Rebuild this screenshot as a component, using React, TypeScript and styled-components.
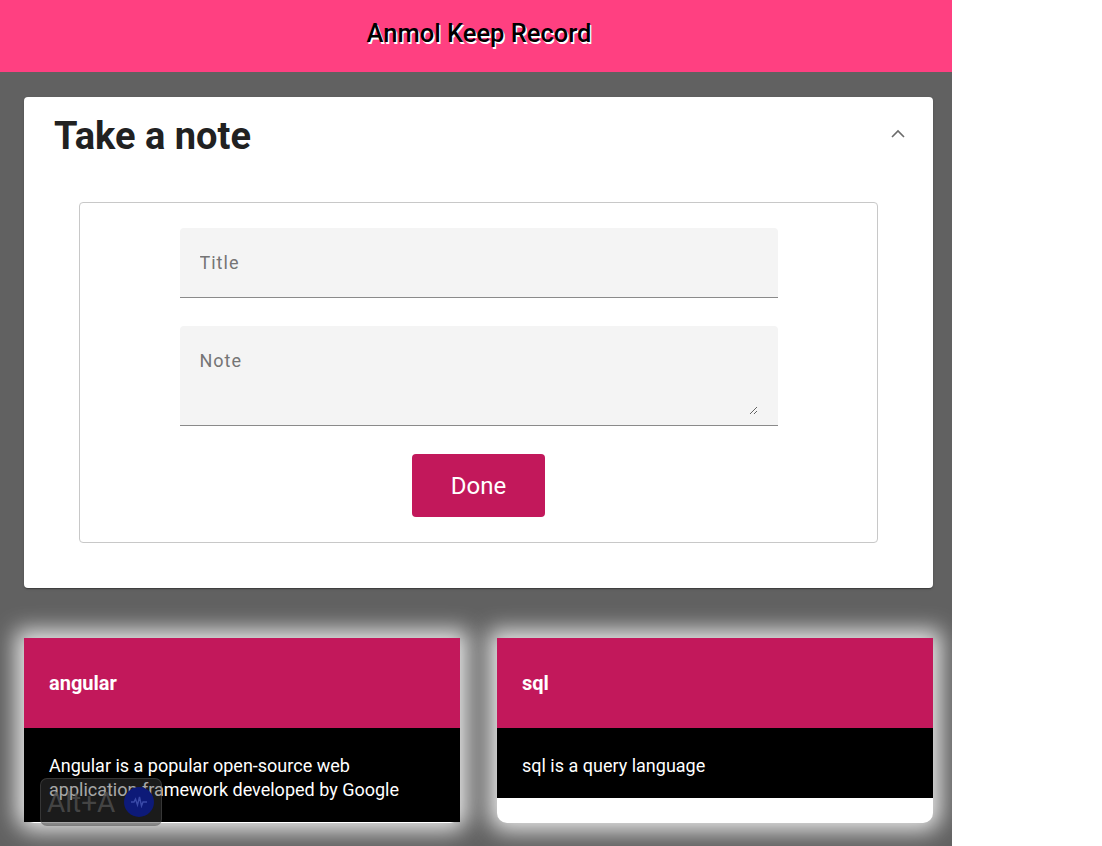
import React from "react";
import styled, { createGlobalStyle } from "styled-components";

const Global = createGlobalStyle`
  html, body { margin: 0; padding: 0; background: #ffffff; }
  body { font-family: Roboto, "Noto Sans", Arial, sans-serif; }
  * { box-sizing: border-box; }
`;

const Page = styled.div`
  width: 952px;
  min-height: 846px;
  background: #616161;
  display: flex;
  flex-direction: column;
  position: relative;
`;

const Header = styled.header`
  height: 72px;
  background: #ff4081;
  display: flex;
  justify-content: center;
  padding-top: 17px;
  padding-left: 6px;
`;

const HeaderTitle = styled.h1`
  margin: 0;
  font-family: Roboto, sans-serif;
  font-size: 25.5px;
  font-weight: 500;
  line-height: 32px;
  color: #000;
  text-shadow: 1.5px 1.5px 0 #ffffff;
`;

const Main = styled.main`
  padding: 25px 19px 0 24px;
  display: flex;
  flex-direction: column;
  gap: 50px;
`;

const Accordion = styled.section`
  background: #fff;
  border-radius: 4px;
  box-shadow: 0 2px 1px -1px rgba(0,0,0,0.2), 0 1px 1px 0 rgba(0,0,0,0.14), 0 1px 3px 0 rgba(0,0,0,0.12);
  height: 491px;
  display: flex;
  flex-direction: column;
`;

const AccordionHead = styled.div`
  display: flex;
  align-items: center;
  justify-content: space-between;
  padding: 4px 26px 0 30px;
  height: 74px;
`;

const AccordionTitle = styled.h2`
  margin: 0;
  font-size: 38px;
  font-weight: 700;
  color: #212121;
  line-height: 46px;
`;

const Chevron = styled.svg`
  width: 18px;
  height: 18px;
  margin-top: -4px;
`;

const FormBox = styled.form`
  margin: 31px 55px 0 55px;
  border: 1px solid #c8c8c8;
  border-radius: 4px;
  height: 341px;
  display: flex;
  flex-direction: column;
  align-items: center;
  padding-top: 25px;
`;

const FieldShell = `
  width: 598px;
  background: #f4f4f4;
  border-bottom: 1px solid #8a8a8a;
  border-radius: 4px 4px 0 0;
`;

const FieldText = `
  font-family: Roboto, sans-serif;
  font-size: 18px;
  letter-spacing: 1px;
  color: #333;
  outline: none;
  &::placeholder { color: #757575; opacity: 1; }
`;

const TitleInput = styled.input`
  ${FieldShell}
  ${FieldText}
  border-top: none;
  border-left: none;
  border-right: none;
  height: 70px;
  padding: 0 20px;
`;

const NoteShell = styled.div`
  ${FieldShell}
  height: 100px;
  margin-top: 28px;
  padding: 23px 20px 10px 20px;
  display: flex;
`;

const NoteArea = styled.textarea`
  ${FieldText}
  flex: 1;
  border: none;
  background: transparent;
  padding: 0;
  margin: 0;
  resize: vertical;
  line-height: 24px;
`;

const DoneButton = styled.button`
  margin-top: 28px;
  width: 133px;
  height: 63px;
  background: #c2185b;
  color: #fff;
  border: none;
  border-radius: 4px;
  font-family: Roboto, sans-serif;
  font-size: 24px;
  font-weight: 400;
`;

const NotesGrid = styled.div`
  display: grid;
  grid-template-columns: 436px 436px;
  column-gap: 37px;
`;

const Card = styled.article`
  height: 185px;
  background: #fff;
  border-radius: 0 0 10px 10px;
  box-shadow: 0 0 22px 8px rgba(255,255,255,0.85);
  display: flex;
  flex-direction: column;
`;

const CardHead = styled.div`
  height: 90px;
  background: #c2185b;
  display: flex;
  align-items: center;
  padding: 0 25px;
`;

const CardTitle = styled.h3`
  margin: 0;
  font-size: 20px;
  font-weight: 700;
  color: #fff;
`;

const CardBody = styled.div`
  background: #000;
  padding: 26px 25px 20px 25px;
  color: #fff;
  font-size: 18px;
  line-height: 24px;
`;

const Overlay = styled.div`
  position: absolute;
  left: 40px;
  top: 778px;
  width: 122px;
  height: 48px;
  border-radius: 7px;
  background: rgba(60,60,60,0.45);
  border: 1px solid rgba(120,120,120,0.3);
  display: flex;
  align-items: center;
  padding-left: 6px;
  gap: 9px;
`;

const OverlayText = styled.span`
  font-size: 28px;
  color: rgba(80,80,80,0.8);
  font-family: Roboto, sans-serif;
`;

const OverlayDot = styled.span`
  width: 30px;
  height: 30px;
  border-radius: 50%;
  background: #0d1a78;
  display: flex;
  align-items: center;
  justify-content: center;
`;

const notes = [
  { title: "angular", body: "Angular is a popular open-source web application framework developed by Google" },
  { title: "sql", body: "sql is a query language" },
];

export default function App() {
  return (
    <>
      <Global />
      <Page>
        <Header>
          <HeaderTitle>Anmol Keep Record</HeaderTitle>
        </Header>
        <Main>
          <Accordion>
            <AccordionHead>
              <AccordionTitle>Take a note</AccordionTitle>
              <Chevron viewBox="0 0 18 18">
                <path d="M3 12 9 6l6 6" fill="none" stroke="#6b6b6b" strokeWidth="1.6" />
              </Chevron>
            </AccordionHead>
            <FormBox onSubmit={(e) => e.preventDefault()}>
              <TitleInput placeholder="Title" />
              <NoteShell>
                <NoteArea placeholder="Note" />
              </NoteShell>
              <DoneButton type="submit">Done</DoneButton>
            </FormBox>
          </Accordion>
          <NotesGrid>
            {notes.map((n) => (
              <Card key={n.title}>
                <CardHead>
                  <CardTitle>{n.title}</CardTitle>
                </CardHead>
                <CardBody>{n.body}</CardBody>
              </Card>
            ))}
          </NotesGrid>
        </Main>
        <Overlay>
          <OverlayText>Alt+A</OverlayText>
          <OverlayDot>
            <svg width="18" height="12" viewBox="0 0 18 12">
              <path d="M1 6h3l1.5-3 2 6 2-8 2 9 1.5-4H17" fill="none" stroke="#3a4aa8" strokeWidth="1.4" />
            </svg>
          </OverlayDot>
        </Overlay>
      </Page>
    </>
  );
}
